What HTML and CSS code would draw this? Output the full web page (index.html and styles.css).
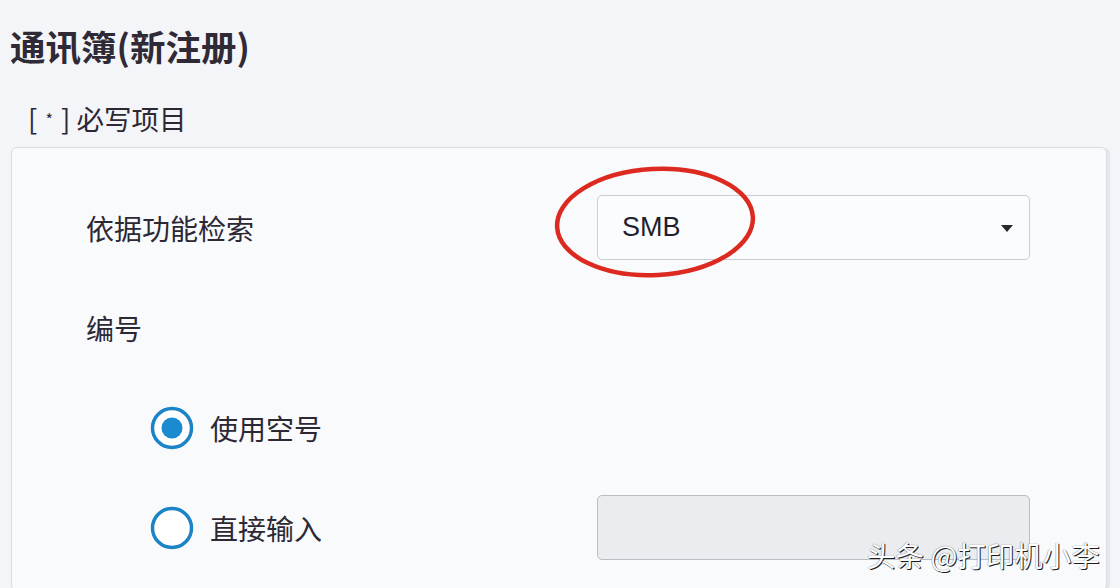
FILE: index.html
```html
<!DOCTYPE html>
<html lang="zh-CN">
<head>
<meta charset="utf-8">
<title>通讯簿(新注册)</title>
<link rel="stylesheet" href="styles.css">
</head>
<body>
<h1 class="title">通讯簿(新注册)</h1>
<p class="required">[ <span class="star">*</span> ] 必写项目</p>
<div class="panel">
  <div class="form">
    <div class="label">依据功能检索</div>
    <div class="select">
      <span class="select-value">SMB</span>
      <span class="caret"></span>
    </div>

    <div class="label label-wide">编号</div>

    <div class="radio-row">
      <svg class="radio" viewBox="0 0 44 44" width="44" height="44">
        <circle cx="22" cy="22" r="19.5" fill="#ffffff" stroke="#1a84c6" stroke-width="3.5"/>
        <circle cx="22" cy="22" r="10.5" fill="#1b8bd0"/>
      </svg>
      <span class="radio-label">使用空号</span>
    </div>
    <div></div>

    <div class="radio-row">
      <svg class="radio" viewBox="0 0 44 44" width="44" height="44">
        <circle cx="22" cy="22" r="19.5" fill="#ffffff" stroke="#1a84c6" stroke-width="3.5"/>
      </svg>
      <span class="radio-label">直接输入</span>
    </div>
    <div class="input-disabled"></div>
  </div>
</div>

<svg class="highlight" viewBox="0 0 206 116" width="206" height="116">
  <ellipse cx="103" cy="58" rx="98" ry="53" fill="none" stroke="#dd2a21" stroke-width="4.5" transform="rotate(-3 103 58)"/>
</svg>

<div class="watermark">头条 @打印机小李</div>
</body>
</html>
```

FILE: styles.css
```css
html, body {
  margin: 0;
  padding: 0;
}

body {
  width: 1120px;
  height: 588px;
  overflow: hidden;
  background: #f4f5f8;
  font-family: "Noto Sans CJK SC", "Noto Sans", sans-serif;
  color: #2c2834;
  position: relative;
}

.title {
  margin: 26px 0 0 10px;
  height: 40px;
  line-height: 40px;
  font-size: 35.5px;
  font-weight: 700;
  color: #2f2a35;
}

.required {
  margin: 34px 0 0 28px;
  height: 36px;
  line-height: 36px;
  font-size: 27.5px;
  color: #2c2834;
}

.star {
  font-size: 16px;
  vertical-align: 4px;
  padding: 0 2px;
}

.panel {
  margin: 11px 13px 0 11px;
  background: #f9fafc;
  border: 1px solid #d9dce2;
  border-radius: 6px;
  box-shadow: 4px 0 0 -1px #e6e7ea;
  padding: 47px 76px 30px 74px;
}

.form {
  display: grid;
  grid-template-columns: 1fr 433px;
  grid-auto-rows: 65px;
  row-gap: 35px;
  align-items: center;
}

.label {
  font-size: 28px;
  line-height: 36px;
  color: #2c2834;
}

.label-wide {
  grid-column: 1 / 3;
}

.select {
  height: 65px;
  box-sizing: border-box;
  border: 1px solid #c9cdd4;
  border-radius: 5px;
  background: #fbfcfd;
  display: flex;
  align-items: center;
  justify-content: space-between;
  padding: 0 16px 0 24px;
}

.select-value {
  font-family: "Liberation Sans", Arial, sans-serif;
  font-size: 27px;
  color: #221f2e;
}

.caret {
  width: 0;
  height: 0;
  border-left: 6.5px solid transparent;
  border-right: 6.5px solid transparent;
  border-top: 7px solid #2a2830;
  margin-top: 1px;
}

.radio-row {
  display: flex;
  align-items: center;
  gap: 16px;
  padding-left: 64px;
}

.radio {
  display: block;
  flex: none;
}

.radio-label {
  font-size: 28px;
  line-height: 36px;
  color: #2c2834;
}

.input-disabled {
  height: 65px;
  box-sizing: border-box;
  border: 1px solid #b9bdc4;
  border-radius: 5px;
  background: #ebecef;
}

.highlight {
  position: absolute;
  left: 552px;
  top: 164px;
}

.watermark {
  position: absolute;
  left: 867px;
  top: 539px;
  font-size: 28.5px;
  line-height: 32px;
  color: #ffffff;
  text-shadow: 1px 1px 0 #1d1d1d, 0 0 1px #444;
  white-space: nowrap;
}
```
